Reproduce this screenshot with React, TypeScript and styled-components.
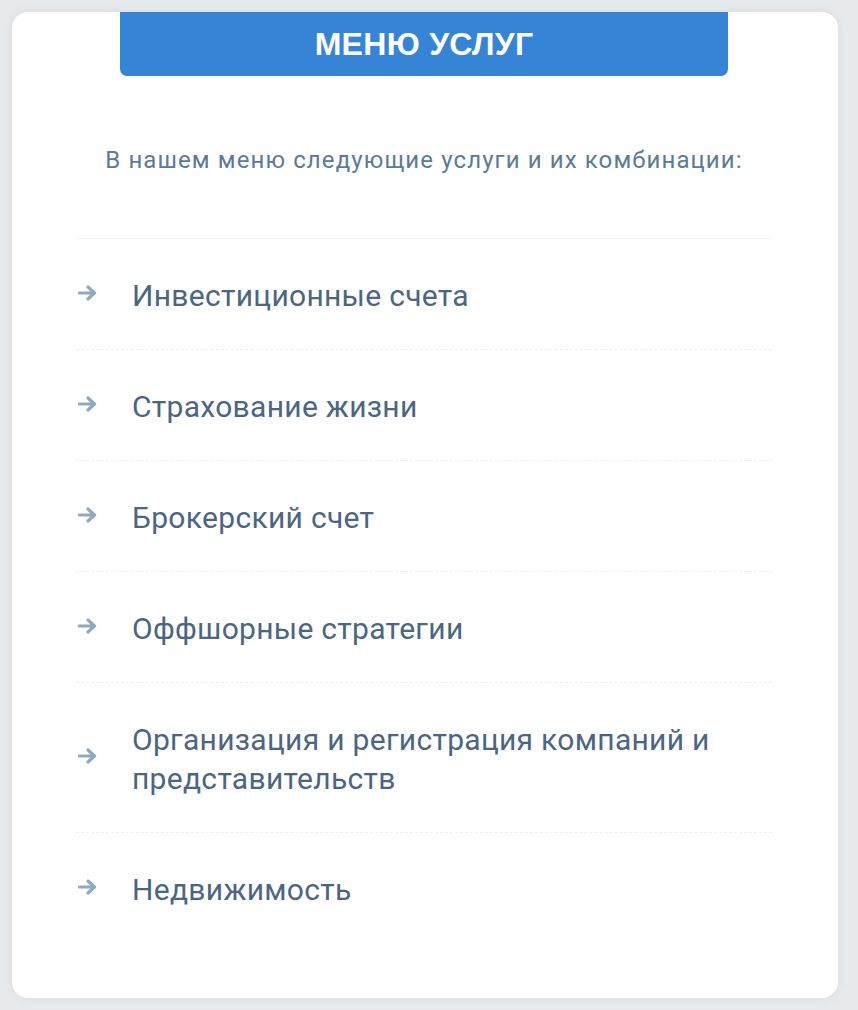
import React from "react";
import styled, { createGlobalStyle } from "styled-components";

const GlobalStyle = createGlobalStyle`
  html, body {
    margin: 0;
    padding: 0;
    background: #e7eaed;
  }
  body {
    padding: 12px 20px 13px 12px;
    font-family: Roboto, "Noto Sans", sans-serif;
  }
`;

const Card = styled.div`
  background: #ffffff;
  border-radius: 16px;
  box-shadow: 0 0 10px rgba(180, 188, 196, 0.35);
  padding: 0 66px 55px 64px;
  display: flex;
  flex-direction: column;
  align-items: center;
`;

const Header = styled.div`
  width: 608px;
  height: 64px;
  background: #3584d6;
  border-radius: 0 0 7px 7px;
  display: flex;
  align-items: center;
  justify-content: center;
  color: #ffffff;
  font-family: "Liberation Sans", Arial, sans-serif;
  font-weight: 700;
  font-size: 32px;
  letter-spacing: 0.3px;
`;

const Intro = styled.p`
  margin: 69px 0 63px;
  font-size: 24px;
  line-height: 30px;
  letter-spacing: 1.1px;
  color: #5b7a98;
  text-align: center;
  white-space: nowrap;
`;

const List = styled.ul`
  list-style: none;
  margin: 0;
  padding: 0;
  width: 100%;
  border-top: 1px solid #f1f3f5;
`;

const Item = styled.li`
  display: flex;
  align-items: center;
  padding: 37px 0 34px;
  border-bottom: 1px dashed #eceff2;

  &:last-child {
    border-bottom: none;
  }
`;

const Arrow = styled.span`
  width: 54px;
  flex: none;
  display: flex;
  align-items: center;
  margin-top: -6px;
  padding-left: 2px;
`;

const Label = styled.span`
  font-size: 30px;
  line-height: 39px;
  letter-spacing: 0.3px;
  color: #4a6683;
`;

const ArrowIcon = () => (
  <svg width="19" height="16" viewBox="0 0 19 16" fill="none">
    <path
      d="M1.5 8 H16 M10 2 L16.5 8 L10 14"
      stroke="#8fa9bf"
      strokeWidth="3.2"
      strokeLinecap="round"
      strokeLinejoin="round"
    />
  </svg>
);

const services = [
  "Инвестиционные счета",
  "Страхование жизни",
  "Брокерский счет",
  "Оффшорные стратегии",
  "Организация и регистрация компаний и представительств",
  "Недвижимость",
];

export default function App() {
  return (
    <>
      <GlobalStyle />
      <Card>
        <Header>МЕНЮ УСЛУГ</Header>
        <Intro>В нашем меню следующие услуги и их комбинации:</Intro>
        <List>
          {services.map((s) => (
            <Item key={s}>
              <Arrow>
                <ArrowIcon />
              </Arrow>
              <Label>{s}</Label>
            </Item>
          ))}
        </List>
      </Card>
    </>
  );
}
